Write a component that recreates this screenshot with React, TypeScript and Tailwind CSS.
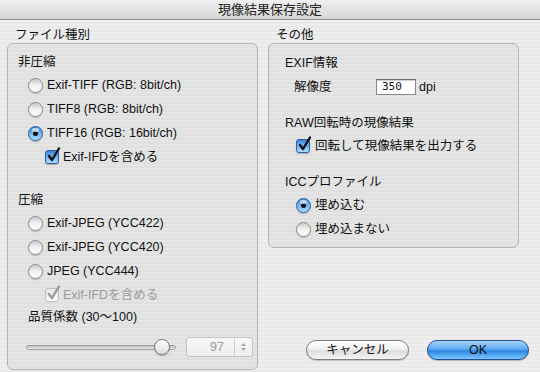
import React from "react";

const FONT = { fontFamily: '"Liberation Sans", "Noto Sans CJK JP", sans-serif' };

function Radio({ checked }: { checked?: boolean }) {
  return checked ? (
    <div className="relative w-[15px] h-[15px] rounded-full border border-[#2f5f9a] bg-[linear-gradient(to_bottom,#3d86d9_0%,#6eb2f2_45%,#a9dcff_100%)] shadow-[0_1px_1px_rgba(0,0,0,0.25)] flex items-center justify-center shrink-0">
      <div className="absolute top-[1px] left-[3px] w-[7px] h-[4px] rounded-full bg-white/60" />
      <div className="w-[5px] h-[5px] rounded-full bg-[#111]" />
    </div>
  ) : (
    <div className="relative w-[15px] h-[15px] rounded-full border border-[#8c8c8c] bg-[linear-gradient(to_bottom,#c9c9c9_0%,#f2f2f2_50%,#ffffff_100%)] shadow-[0_1px_1px_rgba(0,0,0,0.2)] shrink-0" />
  );
}

function Check({ disabled }: { disabled?: boolean }) {
  return (
    <div
      className={
        "relative w-[14px] h-[14px] rounded-[3px] border shrink-0 " +
        (disabled
          ? "border-[#bdbdbd] bg-[linear-gradient(to_bottom,#e6e6e6,#fafafa)]"
          : "border-[#2f5f9a] bg-[linear-gradient(to_bottom,#3d86d9_0%,#6eb2f2_45%,#a9dcff_100%)] shadow-[0_1px_1px_rgba(0,0,0,0.25)]")
      }
    >
      <svg className="absolute left-[1px] top-[-4px]" width="14" height="16" viewBox="0 0 14 16">
        <path
          d="M2 9 L5 13 L12 1.5"
          fill="none"
          stroke={disabled ? "#9a9a9a" : "#111"}
          strokeWidth="2.4"
          strokeLinecap="round"
          strokeLinejoin="round"
        />
      </svg>
    </div>
  );
}

function Row({ children, className = "" }: { children: React.ReactNode; className?: string }) {
  return <div className={"h-[24px] flex items-center " + className}>{children}</div>;
}

export default function App() {
  return (
    <div
      style={FONT}
      className="w-[540px] h-[372px] overflow-hidden text-[12.5px] leading-[16px] text-[#111] bg-[repeating-linear-gradient(to_bottom,#eeeeee_0px,#eeeeee_2px,#e9e9e9_2px,#e9e9e9_4px)] flex flex-col"
    >
      {/* title bar */}
      <div className="h-[20px] shrink-0 border-b border-[#8f8f8f] bg-[linear-gradient(to_bottom,#f0f0f0,#d6d6d6)] flex items-center justify-center text-[13px] text-[#222]">
        現像結果保存設定
      </div>

      <div className="flex flex-1 pl-[7px] pt-[7px]">
        {/* left column */}
        <div className="w-[251px] flex flex-col">
          <div className="pl-[8px] h-[16px]">ファイル種別</div>
          <div className="flex-1 mb-[2px] rounded-[6px] border border-[#b4b4b4] bg-black/[0.035] pl-[10px] pt-[10px] flex flex-col">
            <div>非圧縮</div>
            <div className="mt-[3px] pl-[10px]">
              <Row>
                <Radio />
                <span className="ml-[4px]">Exif-TIFF (RGB: 8bit/ch)</span>
              </Row>
              <Row>
                <Radio />
                <span className="ml-[4px]">TIFF8 (RGB: 8bit/ch)</span>
              </Row>
              <Row>
                <Radio checked />
                <span className="ml-[4px]">TIFF16 (RGB: 16bit/ch)</span>
              </Row>
              <Row className="pl-[17px]">
                <Check />
                <span className="ml-[4px]">Exif-IFDを含める</span>
              </Row>
            </div>
            <div className="mt-[23px]">圧縮</div>
            <div className="mt-[3px] pl-[10px]">
              <Row>
                <Radio />
                <span className="ml-[4px]">Exif-JPEG (YCC422)</span>
              </Row>
              <Row>
                <Radio />
                <span className="ml-[4px]">Exif-JPEG (YCC420)</span>
              </Row>
              <Row>
                <Radio />
                <span className="ml-[4px]">JPEG (YCC444)</span>
              </Row>
              <Row className="pl-[17px]">
                <Check disabled />
                <span className="ml-[4px] text-[#9a9a9a]">Exif-IFDを含める</span>
              </Row>
              <div className="mt-[2px] h-[16px]">品質係数 (30〜100)</div>
              <div className="mt-[12px] flex items-center h-[20px]">
                {/* slider */}
                <div className="relative w-[150px] h-[20px] ml-[-2px] flex items-center">
                  <div className="w-full h-[5px] rounded-full border border-[#9f9f9f] bg-[linear-gradient(to_bottom,#bdbdbd,#ededed)]" />
                  <div className="absolute left-[128px] top-[2px] w-[16px] h-[16px] rounded-full border border-[#7a7a7a] bg-[linear-gradient(to_bottom,#ffffff,#dedede)] shadow-[0_1px_1px_rgba(0,0,0,0.25)]" />
                </div>
                {/* stepper */}
                <div className="ml-[10px] w-[67px] h-[20px] rounded-[3px] border border-[#c4c4c4] bg-[linear-gradient(to_bottom,#f7f7f7,#eeeeee)] flex">
                  <div className="flex-1 flex items-center justify-end pr-[10px] text-[#9a9a9a]">97</div>
                  <div className="w-[18px] border-l border-[#cfcfcf] flex flex-col items-center justify-center gap-[2px]">
                    <svg width="5" height="3" viewBox="0 0 5 3"><path d="M0 3 L2.5 0 L5 3Z" fill="#a8a8a8" /></svg>
                    <svg width="5" height="3" viewBox="0 0 5 3"><path d="M0 0 L2.5 3 L5 0Z" fill="#a8a8a8" /></svg>
                  </div>
                </div>
              </div>
            </div>
          </div>
        </div>

        {/* right column */}
        <div className="ml-[10px] w-[251px] flex flex-col">
          <div className="pl-[8px] h-[16px]">その他</div>
          <div className="h-[205px] rounded-[6px] border border-[#b4b4b4] bg-black/[0.035] pl-[16px] pt-[11px] flex flex-col">
            <div>EXIF情報</div>
            <div className="mt-[6px] h-[20px] flex items-center pl-[9px]">
              <span className="w-[82px]">解像度</span>
              <div className="w-[40px] h-[16px] border border-[#8a8a8a] border-t-[#6f6f6f] bg-white flex items-center pl-[5px] text-[11px] shadow-[inset_0_1px_1px_rgba(0,0,0,0.2)]" style={{ fontFamily: '"DejaVu Sans Mono", monospace' }}>
                350
              </div>
              <span className="ml-[3px]">dpi</span>
            </div>
            <div className="mt-[18px]">RAW回転時の現像結果</div>
            <Row className="mt-[3px] pl-[11px]">
              <Check />
              <span className="ml-[5px]">回転して現像結果を出力する</span>
            </Row>
            <div className="mt-[16px]">ICCプロファイル</div>
            <div className="mt-[3px] pl-[11px]">
              <Row>
                <Radio checked />
                <span className="ml-[4px]">埋め込む</span>
              </Row>
              <Row>
                <Radio />
                <span className="ml-[4px]">埋め込まない</span>
              </Row>
            </div>
          </div>
          <div className="flex-1" />
          <div className="flex justify-end gap-[18px] mr-[-10px] mb-[12px]">
            <div className="w-[103px] h-[20px] rounded-full border border-[#7d7d7d] bg-[linear-gradient(to_bottom,#ffffff_0%,#f1f1f1_45%,#dcdcdc_55%,#f4f4f4_100%)] shadow-[0_1px_1px_rgba(0,0,0,0.2)] flex items-center justify-center">
              キャンセル
            </div>
            <div className="w-[102px] h-[20px] rounded-full border border-[#1f4f8f] bg-[linear-gradient(to_bottom,#a9d5fb_0%,#5eaaf0_45%,#2b86e0_55%,#7cc6ff_100%)] shadow-[0_1px_1px_rgba(0,0,0,0.25)] flex items-center justify-center">
              OK
            </div>
          </div>
        </div>
      </div>
    </div>
  );
}
